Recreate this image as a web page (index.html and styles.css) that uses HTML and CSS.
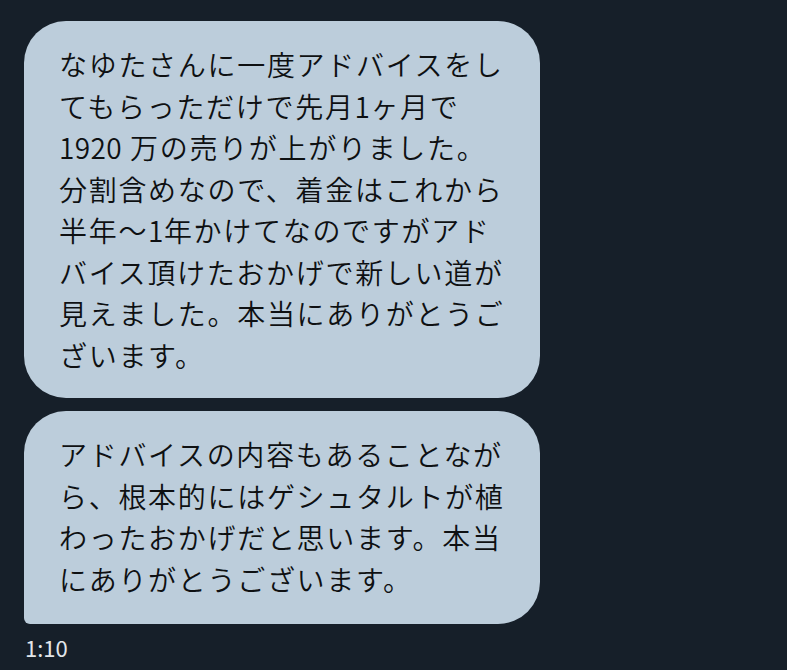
FILE: index.html
```html
<!DOCTYPE html>
<html lang="ja">
<head>
<meta charset="utf-8">
<link rel="stylesheet" href="styles.css">
</head>
<body>
<div class="thread">
  <div class="bubble first">
    <p class="msg">なゆたさんに一度アドバイスをし<br>てもらっただけで先月<span class="num">1</span>ヶ月で<br><span class="num">1920</span> 万の売りが上がりました。<br>分割含めなので、着金はこれから<br>半年〜<span class="num">1</span>年かけてなのですがアド<br>バイス頂けたおかげで新しい道が<br>見えました。本当にありがとうご<br>ざいます。</p>
  </div>
  <div class="bubble second">
    <p class="msg">アドバイスの内容もあることなが<br>ら、根本的にはゲシュタルトが植<br>わったおかげだと思います。本当<br>にありがとうございます。</p>
  </div>
  <div class="time">1:10</div>
</div>
</body>
</html>
```
FILE: styles.css
```css
html, body {
  margin: 0;
  padding: 0;
  background: #161f29;
}
.thread {
  padding: 21px 0 0 24px;
  display: flex;
  flex-direction: column;
  align-items: flex-start;
  gap: 13px;
}
.bubble {
  width: 516px;
  box-sizing: border-box;
  background: #bccddb;
  padding: 23px 20px 22px 35px;
  border-radius: 42px;
}
.second {
  border-radius: 42px 42px 42px 6px;
  padding-bottom: 24px;
}
.msg {
  margin: 0;
  font-family: "Noto Sans CJK JP", "Noto Sans", sans-serif;
  font-weight: 350;
  font-size: 28px;
  letter-spacing: 1.7px;
  line-height: 41.5px;
  color: #0e1012;
  white-space: nowrap;
}
.num {
  letter-spacing: 0.4px;
}
.time {
  margin-top: -3px;
  margin-left: 1px;
  font-family: "Noto Sans CJK JP", "Noto Sans", sans-serif;
  font-weight: 400;
  font-size: 22px;
  line-height: 26px;
  color: #e2e6ea;
}
```
